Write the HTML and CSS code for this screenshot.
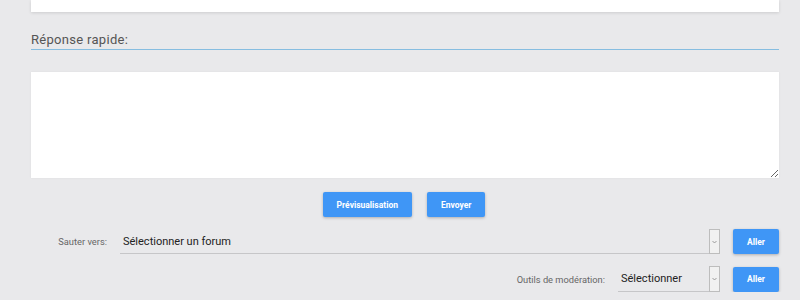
FILE: index.html
```html
<!DOCTYPE html>
<html lang="fr">
<head>
    <meta charset="UTF-8">
    <title>Réponse rapide</title>
    <link rel="stylesheet" href="styles.css">
</head>
<body>
    <div class="page">
        <div class="post-card"></div>

        <div class="quick-title">Réponse rapide:</div>

        <div class="reply-box">
            <textarea class="reply-text"></textarea>
        </div>

        <div class="reply-actions">
            <button class="btn">Prévisualisation</button>
            <button class="btn">Envoyer</button>
        </div>

        <div class="jump-row">
            <label class="row-label jump-label">Sauter vers:</label>
            <div class="select-wrap grow">
                <select class="select">
                    <option>Sélectionner un forum</option>
                </select>
                <span class="select-arrow"><svg width="5" height="4" viewBox="0 0 5 4"><path d="M0.5 1 L2.5 3 L4.5 1" fill="none" stroke="#888" stroke-width="0.8"/></svg></span>
            </div>
            <button class="btn btn-go">Aller</button>
        </div>

        <div class="jump-row mod-row">
            <label class="row-label">Outils de modération:</label>
            <div class="select-wrap mod-select">
                <select class="select">
                    <option>Sélectionner</option>
                </select>
                <span class="select-arrow"><svg width="5" height="4" viewBox="0 0 5 4"><path d="M0.5 1 L2.5 3 L4.5 1" fill="none" stroke="#888" stroke-width="0.8"/></svg></span>
            </div>
            <button class="btn btn-go">Aller</button>
        </div>
    </div>
</body>
</html>
```

FILE: styles.css
```css
body {
    margin: 0;
    background-color: #e9e9eb;
    font-family: Roboto, "Liberation Sans", Arial, sans-serif;
    color: #222;
}
.page {
    width: 748px;
    margin-left: 31px;
}
.post-card {
    height: 12px;
    background: #fff;
    box-shadow: 0 1px 3px rgba(0, 0, 0, 0.12);
}
.quick-title {
    margin-top: 19px;
    font-size: 13px;
    line-height: 17px;
    padding-bottom: 1px;
    color: #555;
    letter-spacing: 0.3px;
    border-bottom: 1px solid #86bde0;
}
.reply-box {
    margin-top: 22px;
    height: 106px;
    background: #fff;
    box-shadow: 0 0 2px rgba(0, 0, 0, 0.06);
}
.reply-text {
    display: block;
    width: 100%;
    height: 100%;
    box-sizing: border-box;
    border: none;
    outline: none;
    background: transparent;
}
.reply-actions {
    display: flex;
    justify-content: center;
    gap: 15px;
    margin-top: 14px;
    padding-right: 2px;
}
.btn {
    height: 25px;
    padding: 0 14px;
    border: none;
    border-radius: 2px;
    background-color: #3f96f6;
    color: #fff;
    font-family: Roboto, "Liberation Sans", Arial, sans-serif;
    font-size: 8.5px;
    font-weight: bold;
    box-shadow: 0 1px 3px rgba(0, 0, 0, 0.25);
    cursor: pointer;
}
.jump-row {
    display: flex;
    align-items: center;
    gap: 13px;
    margin-top: 12px;
}
.mod-row {
    justify-content: flex-end;
    margin-top: 12px;
}
.row-label {
    font-size: 9.3px;
    color: #666;
    text-align: right;
}
.jump-label {
    width: 76px;
}
.select-wrap {
    display: flex;
    height: 25px;
    border-bottom: 1px solid #c6c6c8;
    box-sizing: border-box;
}
.grow {
    flex: 1;
}
.mod-select {
    width: 102px;
    height: 26px;
}
.select {
    flex: 1;
    min-width: 0;
    appearance: none;
    border: none;
    background: transparent;
    padding: 0 0 0 3px;
    font-family: Roboto, "Liberation Sans", Arial, sans-serif;
    font-size: 11px;
    color: #222;
    outline: none;
}
.select-arrow {
    display: flex;
    align-items: center;
    justify-content: center;
    width: 9px;
    margin-bottom: -1px;
    border: 1px solid #bdbdbd;
    background: #f1f1f1;
}
.btn-go {
    width: 46px;
    padding: 0;
}
```
